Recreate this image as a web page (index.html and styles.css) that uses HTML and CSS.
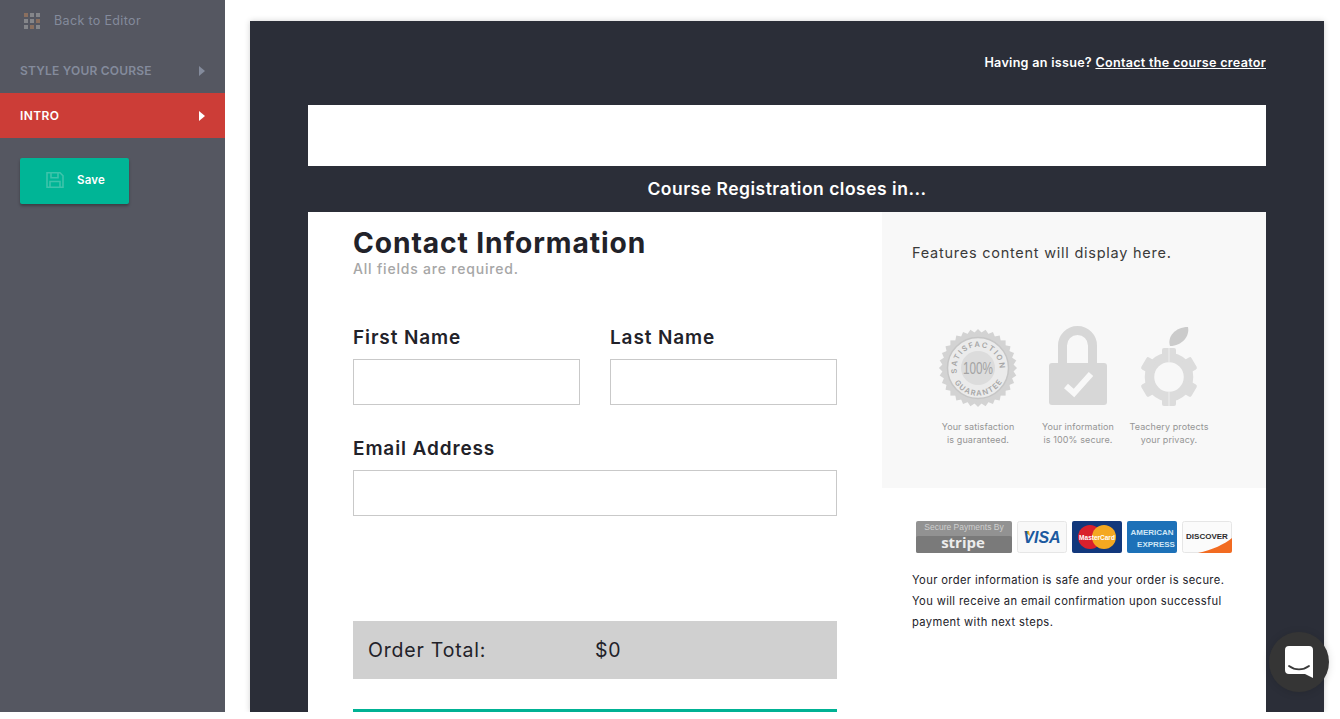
FILE: index.html
```html
<!DOCTYPE html>
<html lang="en">
<head>
<meta charset="utf-8">
<title>Course Registration</title>
<link rel="stylesheet" href="styles.css">
</head>
<body>
<div class="app">
  <aside class="sidebar">
    <a class="back">
      <span class="dots"><i class="tan"></i><i></i><i></i><i></i><i></i><i class="tan"></i><i></i><i class="tan"></i><i></i></span>
      <span>Back to Editor</span>
    </a>
    <div class="nav-item first"><span>STYLE YOUR COURSE</span><i class="tri"></i></div>
    <div class="nav-item active"><span>INTRO</span><i class="tri"></i></div>
    <button class="save">
      <svg class="save-icon" viewBox="0 0 18 18" width="18" height="18" fill="none" stroke="#3dc4ab" stroke-width="1.6"><path d="M1 1.800h13l3 3v11.400H1z"/><path d="M5 1.800v5h7v-5M4 16.200V10.500h10v5.700"/></svg>
      <span>Save</span>
    </button>
  </aside>
  <main class="stage">
    <div class="panel">
      <p class="issue">Having an issue? <a>Contact the course creator</a></p>
      <div class="logo-bar"></div>
      <h2 class="countdown">Course Registration closes in...</h2>
      <div class="sheet">
        <section class="form">
          <h1>Contact Information</h1>
          <p class="hint">All fields are required.</p>
          <div class="names">
            <label class="field">First Name<input type="text"></label>
            <label class="field">Last Name<input type="text"></label>
          </div>
          <label class="field email">Email Address<input type="text"></label>
          <div class="total"><span class="total-label">Order Total:</span><span>$0</span></div>
          <div class="submit"></div>
        </section>
        <section class="side">
          <div class="features">
            <p class="features-text">Features content will display here.</p>
            <div class="trust">
              <figure class="t1">
                <svg viewBox="0 -2 80 80" width="80" height="80">
                  <g fill="#d3d3d3">
                    <rect x="12.400" y="12.400" width="55.200" height="55.200"/>
                    <rect x="12.400" y="12.400" width="55.200" height="55.200" transform="rotate(11.250 40 40)"/>
                    <rect x="12.400" y="12.400" width="55.200" height="55.200" transform="rotate(22.500 40 40)"/>
                    <rect x="12.400" y="12.400" width="55.200" height="55.200" transform="rotate(33.750 40 40)"/>
                    <rect x="12.400" y="12.400" width="55.200" height="55.200" transform="rotate(45 40 40)"/>
                    <rect x="12.400" y="12.400" width="55.200" height="55.200" transform="rotate(56.250 40 40)"/>
                    <rect x="12.400" y="12.400" width="55.200" height="55.200" transform="rotate(67.500 40 40)"/>
                    <rect x="12.400" y="12.400" width="55.200" height="55.200" transform="rotate(78.750 40 40)"/>
                  </g>
                  <circle cx="40" cy="40" r="30.500" fill="#ebebeb" stroke="#c6c6c6" stroke-width="1.500"/>
                  <circle cx="40" cy="40" r="17" fill="#dcdcdc"/>
                  <defs>
                    <path id="arc-top" d="M19 45A21.500 21.500 0 1 1 61 45"/>
                    <path id="arc-bot" d="M14 50A28 28 0 0 0 66 50"/>
                  </defs>
                  <text class="seal-arc"><textPath href="#arc-top" textLength="72" lengthAdjust="spacing">SATISFACTION</textPath></text>
                  <text class="seal-arc"><textPath href="#arc-bot" startOffset="5" textLength="57" lengthAdjust="spacing">GUARANTEE</textPath></text>
                  <text class="seal-mid" x="40" y="46" text-anchor="middle" textLength="30" lengthAdjust="spacingAndGlyphs">100%</text>
                </svg>
                <figcaption>Your satisfaction<br>is guaranteed.</figcaption>
              </figure>
              <figure class="t2">
                <svg viewBox="0 0 58 80" width="58" height="80">
                  <path d="M13.500 38V19.500a15 15 0 0 1 30 0V38" fill="none" stroke="#d7d7d7" stroke-width="9"/>
                  <rect x="0" y="37" width="58" height="42" rx="3" fill="#d7d7d7"/>
                  <path d="M17 60l8 7 17-19" fill="none" stroke="#f8f8f8" stroke-width="6"/>
                </svg>
                <figcaption>Your information<br>is 100% secure.</figcaption>
              </figure>
              <figure class="t3">
                <svg viewBox="0 0 60 80" width="60" height="80">
                  <path d="M31 20c-3-9 5-19 18-19 2 9-6 19-18 19z" fill="#cbcbcb"/>
                  <circle cx="30" cy="51" r="19.500" fill="none" stroke="#dcdcdc" stroke-width="9.500"/>
                  <g fill="#dcdcdc">
                    <rect x="23" y="22" width="14" height="10" rx="2"/>
                    <rect x="23" y="22" width="14" height="10" rx="2" transform="rotate(60 30 51)"/>
                    <rect x="23" y="22" width="14" height="10" rx="2" transform="rotate(120 30 51)"/>
                    <rect x="23" y="22" width="14" height="10" rx="2" transform="rotate(180 30 51)"/>
                    <rect x="23" y="22" width="14" height="10" rx="2" transform="rotate(240 30 51)"/>
                    <rect x="23" y="22" width="14" height="10" rx="2" transform="rotate(300 30 51)"/>
                  </g>
                  <path d="M30 22v14M30 66v14" stroke="#f2f2f2" stroke-width=".8"/>
                </svg>
                <figcaption>Teachery protects<br>your privacy.</figcaption>
              </figure>
            </div>
          </div>
          <div class="cards">
            <svg viewBox="0 0 96 32" width="96" height="32">
              <rect width="96" height="32" rx="2" fill="#929292"/>
              <rect y="15" width="96" height="17" rx="2" fill="#7a7a7a"/>
              <text class="stripe-top" x="48" y="9" text-anchor="middle">Secure Payments By</text>
              <text class="stripe-name" x="47" y="27" text-anchor="middle">stripe</text>
            </svg>
            <svg viewBox="0 0 50 32" width="50" height="32">
              <rect x=".5" y=".5" width="49" height="31" rx="2" fill="#f8f8f8" stroke="#e6e6e6"/>
              <path d="M7 10h5l1 5z" fill="#e9a530"/>
              <text class="visa" x="25" y="22" text-anchor="middle">VISA</text>
            </svg>
            <svg viewBox="0 0 50 32" width="50" height="32">
              <rect width="50" height="32" rx="2" fill="#12387c"/>
              <circle cx="18" cy="16" r="12" fill="#d9212c"/>
              <circle cx="32" cy="16" r="12" fill="#f4a821"/>
              <text class="mc" x="25" y="18.500" text-anchor="middle">MasterCard</text>
            </svg>
            <svg viewBox="0 0 50 32" width="50" height="32">
              <rect width="50" height="32" rx="2" fill="#1d71b8"/>
              <text class="amex" x="25" y="14" text-anchor="middle">AMERICAN</text>
              <text class="amex" x="29" y="26" text-anchor="middle">EXPRESS</text>
            </svg>
            <svg viewBox="0 0 50 32" width="50" height="32">
              <rect x=".5" y=".5" width="49" height="31" rx="2" fill="#fbfbfb" stroke="#e6e6e6"/>
              <path d="M16 32c14-3 27-9 34-15v13a2 2 0 0 1-2 2z" fill="#f26b21"/>
              <text class="disc" x="25" y="18" text-anchor="middle">DISCOVER</text>
            </svg>
          </div>
          <p class="secure">Your order information is safe and your order is secure.<br>You will receive an email confirmation upon successful<br>payment with next steps.</p>
        </section>
      </div>
    </div>
  </main>
  <button class="chat" aria-label="Chat">
    <svg viewBox="0 0 28 32" width="28" height="32"><path d="M4 0h20a4 4 0 0 1 4 4v28l-8-4H4a4 4 0 0 1-4-4V4a4 4 0 0 1 4-4z" fill="#fff"/><path d="M4 20c6 4.500 14 4.500 20 0" fill="none" stroke="#3a3a3a" stroke-width="1.800" stroke-linecap="round"/></svg>
  </button>
</div>
</body>
</html>
```
FILE: styles.css
```css
* { box-sizing: border-box; }
html, body { margin: 0; padding: 0; background: #fff; }
body { font-family: Inter, "Liberation Sans", sans-serif; color: #222229; }
.app { position: relative; display: flex; height: 712px; overflow: hidden; }

.sidebar { flex: 0 0 225px; background: #555761; }
.back { display: flex; align-items: center; gap: 14px; height: 41px; padding-left: 24px; font-size: 12.500px; letter-spacing: .35px; color: #848b9c; }
.dots { display: grid; grid-template-columns: repeat(3, 4px); grid-auto-rows: 4px; gap: 2px; }
.dots i { background: #85868a; }
.dots i.tan { background: #8a6f5f; }
.nav-item { display: flex; align-items: center; justify-content: space-between; height: 45px; padding: 0 20px; font-size: 12px; font-weight: 600; letter-spacing: .2px; color: #848b9c; }
.nav-item.first { margin-top: 7px; }
.nav-item.active { background: #cc3d37; color: #fff; letter-spacing: .4px; }
.tri { width: 0; height: 0; border-left: 6px solid currentColor; border-top: 5px solid transparent; border-bottom: 5px solid transparent; }
.save { display: flex; align-items: center; gap: 13px; width: 109px; height: 46px; margin: 20px 0 0 20px; padding: 0 0 2px 26px; border: 0; border-radius: 2px; background: #00b596; color: #fff; font: 600 11.500px Inter, sans-serif; letter-spacing: .2px; box-shadow: 0 2px 3px rgba(0,0,0,.3); }
.save-icon { flex: none; }

.stage { flex: 1; min-width: 0; padding: 21px 16px 0 25px; }
.panel { height: 100%; padding: 0 58px; background: #2b2e38; box-shadow: 0 0 6px rgba(0,0,0,.18); overflow: hidden; }
.issue { margin: 0; height: 84px; padding-top: 34px; text-align: right; font-size: 12.600px; line-height: 16px; font-weight: 600; letter-spacing: .28px; color: #fff; }
.issue a { text-decoration: underline; }
.logo-bar { height: 61px; background: #fff; }
.countdown { margin: 1px 0 0; height: 45px; line-height: 44px; text-align: center; font-size: 17.500px; font-weight: 600; letter-spacing: .5px; color: #fff; }
.sheet { display: flex; background: #fff; height: 500px; }

.form { flex: 0 0 574px; padding: 14px 45px 0; }
.form h1 { margin: 0; font-size: 28.200px; line-height: 34px; font-weight: 700; letter-spacing: .9px; color: #222229; }
.hint { margin: 0; font-size: 14px; line-height: 18px; font-weight: 500; letter-spacing: .8px; color: #a6a6a6; }
.names { display: grid; grid-template-columns: 227px 227px; gap: 30px; margin-top: 48px; }
.field { display: block; font-size: 19px; line-height: 24px; font-weight: 600; letter-spacing: .88px; color: #222229; }
.field input { display: block; width: 100%; height: 46px; margin-top: 9px; border: 1px solid #c9c9c9; background: #fff; }
.email { margin-top: 32px; }
.total { display: flex; align-items: center; height: 58px; margin-top: 105px; padding-left: 15px; background: #d0d0d0; font-size: 19.500px; letter-spacing: .8px; color: #222229; }
.total-label { width: 227px; }
.submit { height: 50px; margin-top: 30px; background: #00b294; }

.side { flex: 1; min-width: 0; }
.features { height: 276px; padding: 32px 30px 0; background: #f8f8f8; }
.features-text { margin: 0; font-size: 14.500px; line-height: 18px; letter-spacing: .75px; color: #3a3a3a; }
.trust { display: flex; margin: 64px 0 0 16px; }
.trust figure { margin: 0; text-align: center; }
.trust svg { display: block; margin: 0 auto; overflow: visible; }
.t1, .t2 { width: 100px; }
.t3 { width: 82px; }
.trust figcaption { margin-top: 14px; font-size: 9px; line-height: 13px; letter-spacing: .1px; color: #959595; white-space: nowrap; }
.seal-arc { font: 600 7.500px Inter, sans-serif; fill: #a6a6a6; }
.seal-mid { font: 400 17px "Liberation Sans", sans-serif; fill: #a3a3a3; }
.cards { display: flex; gap: 5px; margin: 33px 0 0 34px; }
.cards svg { display: block; flex: none; }
.stripe-top { font: 400 8.500px "Liberation Sans", sans-serif; fill: #cfcfcf; }
.stripe-name { font: 700 15px "Open Sans", sans-serif; fill: #ececec; }
.visa { font: italic 700 16px "Liberation Sans", sans-serif; fill: #1c5aa0; }
.mc { font: 700 6.500px "Liberation Sans", sans-serif; fill: #fff; }
.amex { font: 700 8px "Liberation Sans", sans-serif; fill: #cfe6f5; }
.disc { font: 700 8px "Liberation Sans", sans-serif; fill: #2b2b2b; }
.secure { margin: 17px 0 0 30px; font-size: 11.200px; line-height: 21px; letter-spacing: .37px; color: #222229; white-space: nowrap; }

.chat { position: absolute; left: 1269px; top: 632px; display: flex; align-items: center; justify-content: center; width: 60px; height: 60px; padding: 0; border: 0; border-radius: 50%; background: #353535; box-shadow: 0 1px 8px rgba(0,0,0,.12); }
```
